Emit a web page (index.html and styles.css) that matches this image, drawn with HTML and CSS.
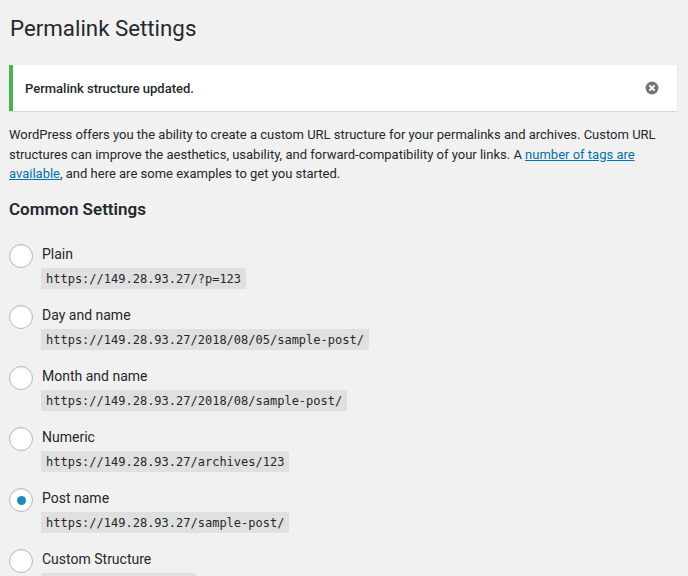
FILE: index.html
```html
<!DOCTYPE html>
<html lang="en">
<head>
<meta charset="utf-8">
<title>Permalink Settings</title>
<link rel="stylesheet" href="styles.css">
</head>
<body>
<div class="wrap">
  <h1 class="page-title">Permalink Settings</h1>

  <div class="notice notice-success">
    <p><strong>Permalink structure updated.</strong></p>
    <button class="notice-dismiss" type="button" aria-label="Dismiss this notice.">
      <svg width="16" height="16" viewBox="0 0 16 16" aria-hidden="true">
        <circle cx="8" cy="8" r="6.5" fill="#72777c"/>
        <path d="M5.4 5.4 L10.6 10.6 M10.6 5.4 L5.4 10.6" stroke="#fff" stroke-width="2" stroke-linecap="butt"/>
      </svg>
    </button>
  </div>

  <p class="intro">WordPress offers you the ability to create a custom URL structure for your permalinks and archives. Custom URL structures can improve the aesthetics, usability, and forward-compatibility of your links. A <a href="#">number of tags are available</a>, and here are some examples to get you started.</p>

  <h2 class="section-title">Common Settings</h2>

  <div class="options">
    <div class="option">
      <label class="option-label"><span class="radio"></span><span class="option-name">Plain</span></label>
      <code class="example">https://149.28.93.27/?p=123</code>
    </div>
    <div class="option">
      <label class="option-label"><span class="radio"></span><span class="option-name">Day and name</span></label>
      <code class="example">https://149.28.93.27/2018/08/05/sample-post/</code>
    </div>
    <div class="option">
      <label class="option-label"><span class="radio"></span><span class="option-name">Month and name</span></label>
      <code class="example">https://149.28.93.27/2018/08/sample-post/</code>
    </div>
    <div class="option">
      <label class="option-label"><span class="radio"></span><span class="option-name">Numeric</span></label>
      <code class="example">https://149.28.93.27/archives/123</code>
    </div>
    <div class="option">
      <label class="option-label"><span class="radio radio-checked"></span><span class="option-name">Post name</span></label>
      <code class="example">https://149.28.93.27/sample-post/</code>
    </div>
    <div class="option">
      <label class="option-label"><span class="radio"></span><span class="option-name">Custom Structure</span></label>
      <code class="example">https://149.28.93.27</code>
    </div>
  </div>
</div>
</body>
</html>
```
FILE: styles.css
```css
html, body {
  margin: 0;
  padding: 0;
  background: #f1f1f1;
}

body {
  font-family: Roboto, "Noto Sans", "Liberation Sans", sans-serif;
  color: #23282d;
  font-size: 13px;
  line-height: 1.5;
}

.wrap {
  padding: 13px 11px 0 9px;
}

.page-title {
  margin: 0 0 0 1px;
  font-size: 22.3px;
  font-weight: 400;
  line-height: 30px;
  color: #23282d;
}

.notice {
  margin-top: 22px;
  height: 46px;
  box-sizing: border-box;
  background: #fff;
  border-left: 4px solid #46b450;
  box-shadow: 0 1px 1px 0 rgba(0, 0, 0, 0.1);
  display: flex;
  align-items: center;
  justify-content: space-between;
  padding: 2px 17px 0 12px;
}

.notice p {
  margin: 0;
  font-size: 13px;
  line-height: 19.5px;
}

.notice strong {
  font-weight: 500;
}

.notice-dismiss {
  border: 0;
  background: none;
  padding: 0;
  margin: -2px 0 0;
  width: 16px;
  height: 16px;
  display: flex;
  cursor: pointer;
}

.intro {
  margin: 14px 0 0;
  font-size: 13px;
  line-height: 19.5px;
}

.intro a {
  color: #0073aa;
  text-decoration: underline;
}

.section-title {
  margin: 14px 0 0;
  font-size: 17px;
  font-weight: 600;
  line-height: 22px;
}

.options {
  margin-top: 24.5px;
  display: flex;
  flex-direction: column;
  gap: 16px;
}

.option {
  display: flex;
  flex-direction: column;
  align-items: flex-start;
}

.option-label {
  display: flex;
  align-items: flex-start;
  gap: 8px;
  height: 24px;
}

.radio {
  width: 24px;
  height: 24px;
  box-sizing: border-box;
  border-radius: 50%;
  border: 1px solid #b4b9be;
  background: #fff;
  box-shadow: inset 0 1px 2px rgba(0, 0, 0, 0.07);
  display: flex;
  align-items: center;
  justify-content: center;
  flex: none;
}

.radio-checked::before {
  content: "";
  width: 9px;
  height: 9px;
  border-radius: 50%;
  background: #1e8cbe;
}

.option-name {
  font-size: 14px;
  line-height: 20px;
  padding-left: 1px;
}

.example {
  margin-left: 32px;
  font-family: "DejaVu Sans Mono", "Liberation Mono", monospace;
  font-size: 12px;
  line-height: 16px;
  padding: 3px 5px 2px;
  background: rgba(0, 0, 0, 0.07);
  color: #23282d;
}
```
